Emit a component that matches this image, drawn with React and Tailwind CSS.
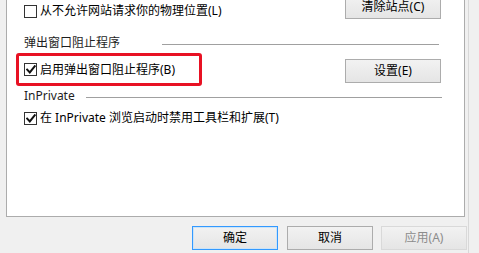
import React from 'react';

const font = { fontFamily: '"Noto Sans", "Noto Sans CJK SC", sans-serif' };

function Check({ checked }) {
    return (
        <span className="w-[13px] h-[13px] border border-[#333333] bg-white flex items-center justify-center shrink-0">
            {checked && (
                <svg width="10" height="9" viewBox="0 0 10 9">
                    <path d="M1.2 4.6 L3.8 7.4 L8.8 1.2" fill="none" stroke="#111" strokeWidth="2" strokeLinecap="square" />
                </svg>
            )}
        </span>
    );
}

function Option({ checked, children }) {
    return (
        <label className="flex items-center gap-[3px] h-[16px] text-[12px] leading-[16px] text-black whitespace-nowrap">
            <Check checked={checked} />
            <span>{children}</span>
        </label>
    );
}

function Button({ children, className = '', variant = 'normal' }) {
    const tone =
        variant === 'default'
            ? 'border-[#3399ff] shadow-[inset_0_0_0_1px_#cce4f7] text-black'
            : variant === 'disabled'
            ? 'border-[#d9d9d9] text-[#8c8c8c] bg-[#f4f4f4]'
            : 'border-[#acacac] text-black';
    return (
        <button
            className={`h-[24px] shrink-0 border flex items-center justify-center text-[12px] leading-[16px] bg-gradient-to-b from-[#f2f2f2] to-[#e5e5e5] ${tone} ${className}`}
        >
            {children}
        </button>
    );
}

export default function App() {
    return (
        <div className="w-[479px] h-[253px] bg-[#f0f0f0] overflow-hidden flex" style={font}>
            <div className="w-[468px] flex flex-col shrink-0">
                {/* Settings panel */}
                <div className="ml-[6px] w-[459px] h-[217px] shrink-0 bg-white border-l border-r border-b border-[#acacac] flex flex-col pl-[17px] pr-[23px]">
                    <div className="flex items-start justify-between h-[19px]">
                        <div className="mt-[3px]">
                            <Option>从不允许网站请求你的物理位置(L)</Option>
                        </div>
                        <Button className="w-[96px] mt-[-5px]">清除站点(C)</Button>
                    </div>

                    <div className="flex items-center h-[16px] mt-[16px] text-[12px] leading-[16px] text-[#1e1e1e]">
                        <span className="whitespace-nowrap">弹出窗口阻止程序</span>
                        <div className="flex-1 h-px bg-[#a0a0a0] ml-[42px] mr-[2px] mt-[2px]" />
                    </div>

                    <div className="flex items-start justify-between mt-[2px] h-[33px]">
                        <div className="ml-[-8px] w-[186px] h-[33px] border-[3px] border-[#e81123] rounded-[3px] flex items-center pl-[5px]">
                            <Option checked>启用弹出窗口阻止程序(B)</Option>
                        </div>
                        <Button className="w-[96px] mt-[6px]">设置(E)</Button>
                    </div>

                    <div className="flex items-center h-[16px] mt-[2px] text-[12px] leading-[16px] text-[#1e1e1e]">
                        <span className="whitespace-nowrap">InPrivate</span>
                        <div className="flex-1 h-px bg-[#a0a0a0] ml-[11px] mr-[-1px] mt-[2px]" />
                    </div>

                    <div className="mt-[6px]">
                        <Option checked>在 InPrivate 浏览启动时禁用工具栏和扩展(T)</Option>
                    </div>
                </div>

                {/* Dialog buttons */}
                <div className="flex mt-[9px] ml-[192px]">
                    <Button variant="default" className="w-[86px]">确定</Button>
                    <Button className="w-[86px] ml-[9px]">取消</Button>
                    <Button variant="disabled" className="w-[86px] ml-[8px]">应用(A)</Button>
                </div>
            </div>
            <div className="w-px h-full bg-[#d8d8d8]" />
        </div>
    );
}
